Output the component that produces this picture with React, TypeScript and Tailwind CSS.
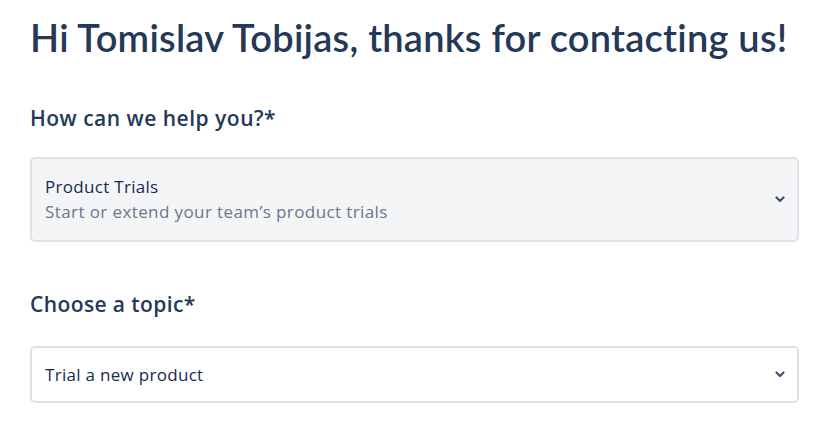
import React from "react";

function Chevron() {
  return (
    <svg width="10" height="7" viewBox="0 0 10 7" className="shrink-0">
      <path d="M1.5 1.5 L5 5 L8.5 1.5" fill="none" stroke="#42526e" strokeWidth="2.2" strokeLinecap="round" strokeLinejoin="round" />
    </svg>
  );
}

export default function App() {
  return (
    <div className="w-[828px] h-[425px] bg-white text-[#253858] overflow-hidden font-['Open_Sans','Noto_Sans',sans-serif]">
      <div className="pl-[30px] pr-[29px] pt-[14px]">
        <h1 className="font-['Lato','Open_Sans',sans-serif] text-[38px] leading-[46px] font-semibold tracking-[0.25px] whitespace-nowrap">Hi Tomislav Tobijas, thanks for contacting us!</h1>
        <h2 className="mt-[45px] text-[21px] leading-[26px] font-semibold tracking-[0.5px]">How can we help you?*</h2>
        <div className="mt-[26px] h-[85px] rounded-[5px] border-2 border-[#dfe1e6] bg-[#f4f5f7] flex items-center pl-[13px] pr-[12px]">
          <div className="flex-1">
            <div className="text-[17px] leading-[22px] tracking-[0.3px] text-[#172b4d]">Product Trials</div>
            <div className="mt-[3px] text-[17px] leading-[22px] tracking-[0.4px] text-[#6b778c]">Start or extend your team’s product trials</div>
          </div>
          <Chevron />
        </div>
        <h2 className="mt-[49px] text-[21px] leading-[26px] font-semibold tracking-[0.4px]">Choose a topic*</h2>
        <div className="mt-[29px] h-[57px] rounded-[5px] border-2 border-[#dfe1e6] bg-white flex items-center pl-[13px] pr-[12px]">
          <div className="flex-1 text-[17px] leading-[22px] tracking-[0.3px] text-[#172b4d]">Trial a new product</div>
          <Chevron />
        </div>
      </div>
    </div>
  );
}
